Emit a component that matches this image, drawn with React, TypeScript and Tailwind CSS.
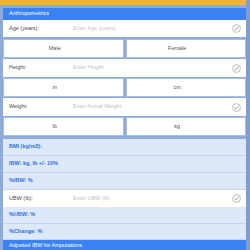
import type { ReactNode } from 'react'

function Check() {
  return (
    <svg width="9" height="9" viewBox="0 0 9 9" className="shrink-0">
      <circle cx="4.5" cy="4.5" r="3.9" fill="none" stroke="#a3a3a3" strokeWidth="0.7" />
      <path d="M2.8 4.7 L4 5.9 L6.3 3.2" fill="none" stroke="#8a8a8a" strokeWidth="0.8" strokeLinecap="round" />
    </svg>
  )
}

function InputRow({ label, placeholder, h = 'h-[17px]' }: { label: string; placeholder: string; h?: string }) {
  return (
    <div className={`${h} bg-white flex items-center pl-[6px] pr-[5px]`}>
      <span className="w-[64px] text-[#4a4a4a]">{label}</span>
      <span className="flex-1 text-[#c4c4c4]">{placeholder}</span>
      <Check />
    </div>
  )
}

function Toggle({ left, right }: { left: string; right: string }) {
  return (
    <div className="h-[19px] grid grid-cols-2 gap-[2px]">
      <div className="bg-white border border-[#a9bfe6] flex items-center justify-center pr-[17px] text-[#555]">{left}</div>
      <div className="bg-white border border-[#a9bfe6] flex items-center justify-center pr-[17px] text-[#555]">{right}</div>
    </div>
  )
}

function ResultRow({ children, h = 'h-[17px]' }: { children: ReactNode; h?: string }) {
  return (
    <div className={`${h} bg-[#dde8f9] border-b border-[#c6d6f0] flex items-center pl-[6px] text-[#2f72e4] font-bold`}>
      {children}
    </div>
  )
}

export default function App() {
  return (
    <div className="w-[250px] h-[250px] overflow-hidden flex bg-[#8eaad9] text-[5.5px] leading-none" style={{ fontFamily: '"Liberation Sans", Arial, sans-serif' }}>
      <div className="w-[246px] flex flex-col">
        <div className="h-[5px] bg-[#f1b245] shrink-0" />
        <div className="flex flex-col pl-[3px] pt-[3px]">
          <div className="h-[12px] bg-[#3a82f2] text-white flex items-center pl-[6px]">Anthropometrics</div>
          <InputRow label="Age (years):" placeholder="Enter Age (years)" />
          <div className="h-[2px]" />
          <Toggle left="Male" right="Female" />
          <div className="h-[1px]" />
          <InputRow label="Height:" placeholder="Enter Height" h="h-[18px]" />
          <div className="h-[1px]" />
          <Toggle left="in" right="cm" />
          <div className="h-[1px]" />
          <InputRow label="Weight:" placeholder="Enter Actual Weight" h="h-[18px]" />
          <div className="h-[1px]" />
          <Toggle left="lb" right="kg" />
          <div className="h-[3px]" />
          <ResultRow>BMI (kg/m2):</ResultRow>
          <ResultRow>IBW: kg, lb +/- 10%</ResultRow>
          <ResultRow>%IBW: %</ResultRow>
          <InputRow label="UBW (lb):" placeholder="Enter UBW (lb)" />
          <ResultRow>%UBW: %</ResultRow>
          <ResultRow h="h-[16px]">%Change: %</ResultRow>
          <div className="h-[12px] bg-[#3a82f2] text-white flex items-center pl-[6px]">Adjusted IBW for Amputations</div>
        </div>
      </div>
      <div className="w-[4px] bg-[#819dcd]" />
    </div>
  )
}
